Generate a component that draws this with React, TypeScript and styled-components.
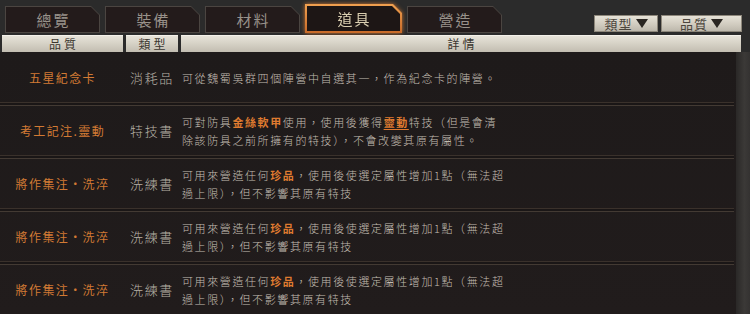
import React from "react";
import styled, { createGlobalStyle, css } from "styled-components";

const GlobalStyle = createGlobalStyle`
  html, body {
    margin: 0;
    padding: 0;
    background: #2b2b2b;
    width: 750px;
    height: 314px;
    overflow: hidden;
  }
  * { box-sizing: border-box; }
`;

const FONT = `"Noto Sans CJK TC", "Noto Sans CJK SC", "Liberation Serif", serif`;

const Screen = styled.div`
  width: 750px;
  height: 314px;
  display: flex;
  flex-direction: column;
  font-family: ${FONT};
  font-weight: 300;
  background: #2b2b2b;
  overflow: hidden;
`;

const TopBar = styled.div`
  height: 35px;
  display: flex;
  align-items: flex-end;
  justify-content: space-between;
  padding: 0 8px 2px 5px;
`;

const Tabs = styled.div`
  display: flex;
  gap: 5px;
  align-items: flex-end;
`;

const TabOuter = styled.div<{ $active?: boolean }>`
  width: 95px;
  height: 27px;
  padding: 1px;
  background: #4b4541;
  clip-path: polygon(0 0, calc(100% - 9px) 0, 100% 9px, 100% 100%, 0 100%);
  ${(p) =>
    p.$active &&
    css`
      width: 97px;
      height: 29px;
      padding: 2px;
      background: linear-gradient(180deg, #f0a050, #c86a28);
    `}
`;

const TabGlow = styled.div<{ $active?: boolean }>`
  ${(p) =>
    p.$active &&
    css`
      filter: drop-shadow(0 0 2px rgba(235, 130, 50, 0.85));
    `}
`;

const TabInner = styled.div<{ $active?: boolean }>`
  width: 100%;
  height: 100%;
  background: ${(p) => (p.$active ? "#1d1615" : "#231b1b")};
  clip-path: polygon(0 0, calc(100% - 8px) 0, 100% 8px, 100% 100%, 0 100%);
  display: flex;
  align-items: center;
  justify-content: center;
  font-size: 15px;
  font-weight: 400;
  letter-spacing: 2px;
  padding-left: 2px;
  color: ${(p) => (p.$active ? "#d9ceb0" : "#98918a")};
`;

const Dropdowns = styled.div`
  display: flex;
  gap: 3px;
  margin-bottom: 1px;
`;

const DropButton = styled.div<{ $w: number }>`
  width: ${(p) => p.$w}px;
  height: 17px;
  border: 1px solid #8d877b;
  background: linear-gradient(180deg, #e6e2d7 0%, #cfcabe 60%, #bdb8ac 100%);
  display: flex;
  align-items: center;
  justify-content: center;
  gap: 3px;
  font-size: 13px;
  font-weight: 400;
  letter-spacing: 1px;
  color: #4c463d;
`;

const Triangle = styled.span`
  width: 0;
  height: 0;
  border-left: 6px solid transparent;
  border-right: 6px solid transparent;
  border-top: 9px solid #2a2622;
`;

const HeaderRow = styled.div`
  display: grid;
  grid-template-columns: 121px 52px 1fr;
  column-gap: 3px;
  padding: 0 9px 0 2px;
  height: 16px;
`;

const HeaderCell = styled.div`
  background: linear-gradient(180deg, #e9e5db 0%, #d6d2c6 50%, #c2bdb1 100%);
  border-bottom: 1px solid #8a8478;
  box-shadow: inset 0 1px 0 #f4f1ea;
  display: flex;
  align-items: center;
  justify-content: center;
  font-size: 12px;
  font-weight: 400;
  letter-spacing: 3px;
  padding-left: 3px;
  color: #3b362f;
`;

const ListArea = styled.div`
  flex: 1;
  display: flex;
  margin-top: 1px;
`;

const List = styled.div`
  flex: 1;
  background: linear-gradient(180deg, #1e1a1a 0%, #211c1c 100%);
  display: flex;
  flex-direction: column;
  padding-top: 1px;
`;

const ScrollStrip = styled.div`
  width: 14px;
  background: linear-gradient(90deg, #2a2827 0%, #3b3937 60%, #343231 100%);
`;

const Row = styled.div`
  display: grid;
  grid-template-columns: 121px 52px 1fr;
  column-gap: 3px;
  padding-left: 2px;
  min-height: 49px;
  align-items: center;
`;

const Separator = styled.div`
  height: 4px;
  border-top: 1px solid #3a312b;
  border-bottom: 1px solid #433a33;
  background: #1a1616;
  margin-right: 2px;
`;

const NameCell = styled.div`
  text-align: center;
  font-size: 12px;
  font-weight: 400;
  letter-spacing: 1.4px;
  color: #d27a34;
`;

const TypeCell = styled.div`
  text-align: center;
  font-size: 13px;
  letter-spacing: 1.6px;
  color: #b7b1a6;
`;

const DescCell = styled.div`
  padding-left: 1px;
  font-size: 11px;
  line-height: 18px;
  letter-spacing: 1.6px;
  color: #c3bdb2;
`;

const Line = styled.div`
  white-space: nowrap;
`;

const Hl = styled.span<{ $u?: boolean }>`
  color: #df7a30;
  font-weight: 700;
  ${(p) =>
    p.$u &&
    css`
      text-decoration: underline;
      text-underline-offset: 2px;
    `}
`;

type Seg = string | { t: string; u?: boolean };

type Item = { name: string; type: string; lines: Seg[][] };

const refine: Seg[][] = [
  ["可用來營造任何", { t: "珍品" }, "，使用後使選定屬性增加1點（無法超"],
  ["過上限），但不影響其原有特技"],
];

const items: Item[] = [
  {
    name: "五星紀念卡",
    type: "消耗品",
    lines: [["可從魏蜀吳群四個陣營中自選其一，作為紀念卡的陣營。"]],
  },
  {
    name: "考工記注.靈動",
    type: "特技書",
    lines: [
      ["可對防具", { t: "金絲軟甲" }, "使用，使用後獲得", { t: "靈動", u: true }, "特技（但是會清"],
      ["除該防具之前所擁有的特技），不會改變其原有屬性。"],
    ],
  },
  { name: "將作集注・洗淬", type: "洗練書", lines: refine },
  { name: "將作集注・洗淬", type: "洗練書", lines: refine },
  { name: "將作集注・洗淬", type: "洗練書", lines: refine },
];

const tabs = ["總覽", "裝備", "材料", "道具", "營造"];

export default function App() {
  return (
    <Screen>
      <GlobalStyle />
      <TopBar>
        <Tabs>
          {tabs.map((t, i) => {
            const active = i === 3;
            return (
              <TabGlow key={t} $active={active}>
                <TabOuter $active={active}>
                  <TabInner $active={active}>{t}</TabInner>
                </TabOuter>
              </TabGlow>
            );
          })}
        </Tabs>
        <Dropdowns>
          <DropButton $w={64}>
            類型<Triangle />
          </DropButton>
          <DropButton $w={81}>
            品質<Triangle />
          </DropButton>
        </Dropdowns>
      </TopBar>
      <HeaderRow>
        <HeaderCell>品質</HeaderCell>
        <HeaderCell>類型</HeaderCell>
        <HeaderCell>詳情</HeaderCell>
      </HeaderRow>
      <ListArea>
        <List>
          {items.map((it, i) => (
            <React.Fragment key={i}>
              {i > 0 && <Separator />}
              <Row>
                <NameCell>{it.name}</NameCell>
                <TypeCell>{it.type}</TypeCell>
                <DescCell>
                  {it.lines.map((ln, j) => (
                    <Line key={j}>
                      {ln.map((s, k) =>
                        typeof s === "string" ? (
                          <React.Fragment key={k}>{s}</React.Fragment>
                        ) : (
                          <Hl key={k} $u={s.u}>
                            {s.t}
                          </Hl>
                        )
                      )}
                    </Line>
                  ))}
                </DescCell>
              </Row>
            </React.Fragment>
          ))}
        </List>
        <ScrollStrip />
      </ListArea>
    </Screen>
  );
}
